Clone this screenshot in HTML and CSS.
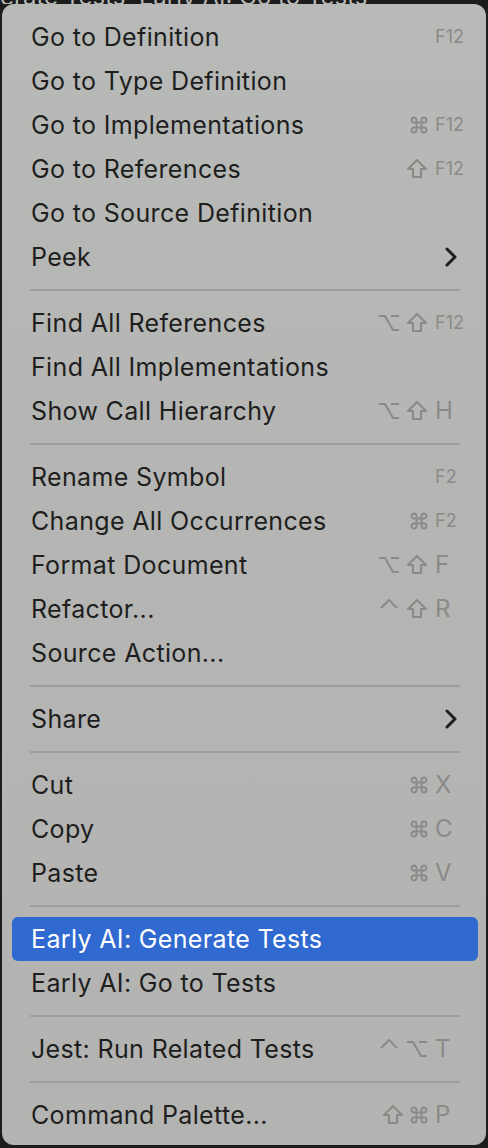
FILE: index.html
```html
<!DOCTYPE html>
<html>
<head>
<meta charset="utf-8">
<link rel="stylesheet" href="styles.css">
</head>
<body>
<div class="backdrop"><span>erate Tests&nbsp;&nbsp;Early AI: Go to Tests</span></div>
<div class="menu">
  <div class="item"><span class="label">Go to Definition</span><span class="sc"><span class="mods"></span><span class="key fk">F12</span></span></div>
  <div class="item"><span class="label">Go to Type Definition</span></div>
  <div class="item"><span class="label">Go to Implementations</span><span class="sc"><span class="mods"><svg class="g cmd" viewBox="0 0 24 24"><path d="M15 6v12a3 3 0 1 0 3-3H6a3 3 0 1 0 3 3V6a3 3 0 1 0-3 3h12a3 3 0 1 0-3-3z"/></svg></span><span class="key fk">F12</span></span></div>
  <div class="item"><span class="label">Go to References</span><span class="sc"><span class="mods"><svg class="g" viewBox="0 0 24 24"><path d="M12 3 21 12h-5v8H8v-8H3z"/></svg></span><span class="key fk">F12</span></span></div>
  <div class="item"><span class="label">Go to Source Definition</span></div>
  <div class="item"><span class="label">Peek</span><svg class="chev" viewBox="0 0 12 20"><path d="M2 2l8 8-8 8"/></svg></div>
  <div class="sep"></div>
  <div class="item"><span class="label">Find All References</span><span class="sc"><span class="mods"><svg class="g" viewBox="0 0 24 24"><path d="M2 5h6l8 14h6M14 5h8"/></svg><svg class="g" viewBox="0 0 24 24"><path d="M12 3 21 12h-5v8H8v-8H3z"/></svg></span><span class="key fk">F12</span></span></div>
  <div class="item"><span class="label">Find All Implementations</span></div>
  <div class="item"><span class="label">Show Call Hierarchy</span><span class="sc"><span class="mods"><svg class="g" viewBox="0 0 24 24"><path d="M2 5h6l8 14h6M14 5h8"/></svg><svg class="g" viewBox="0 0 24 24"><path d="M12 3 21 12h-5v8H8v-8H3z"/></svg></span><span class="key">H</span></span></div>
  <div class="sep"></div>
  <div class="item"><span class="label">Rename Symbol</span><span class="sc"><span class="mods"></span><span class="key fk">F2</span></span></div>
  <div class="item"><span class="label">Change All Occurrences</span><span class="sc"><span class="mods"><svg class="g cmd" viewBox="0 0 24 24"><path d="M15 6v12a3 3 0 1 0 3-3H6a3 3 0 1 0 3 3V6a3 3 0 1 0-3 3h12a3 3 0 1 0-3-3z"/></svg></span><span class="key fk">F2</span></span></div>
  <div class="item"><span class="label">Format Document</span><span class="sc"><span class="mods"><svg class="g" viewBox="0 0 24 24"><path d="M2 5h6l8 14h6M14 5h8"/></svg><svg class="g" viewBox="0 0 24 24"><path d="M12 3 21 12h-5v8H8v-8H3z"/></svg></span><span class="key">F</span></span></div>
  <div class="item"><span class="label">Refactor...</span><span class="sc"><span class="mods"><svg class="g" viewBox="0 0 24 24"><path d="M4 11l8-8 8 8"/></svg><svg class="g" viewBox="0 0 24 24"><path d="M12 3 21 12h-5v8H8v-8H3z"/></svg></span><span class="key">R</span></span></div>
  <div class="item"><span class="label">Source Action...</span></div>
  <div class="sep"></div>
  <div class="item"><span class="label">Share</span><svg class="chev" viewBox="0 0 12 20"><path d="M2 2l8 8-8 8"/></svg></div>
  <div class="sep"></div>
  <div class="item"><span class="label">Cut</span><span class="sc"><span class="mods"><svg class="g cmd" viewBox="0 0 24 24"><path d="M15 6v12a3 3 0 1 0 3-3H6a3 3 0 1 0 3 3V6a3 3 0 1 0-3 3h12a3 3 0 1 0-3-3z"/></svg></span><span class="key">X</span></span></div>
  <div class="item"><span class="label">Copy</span><span class="sc"><span class="mods"><svg class="g cmd" viewBox="0 0 24 24"><path d="M15 6v12a3 3 0 1 0 3-3H6a3 3 0 1 0 3 3V6a3 3 0 1 0-3 3h12a3 3 0 1 0-3-3z"/></svg></span><span class="key">C</span></span></div>
  <div class="item"><span class="label">Paste</span><span class="sc"><span class="mods"><svg class="g cmd" viewBox="0 0 24 24"><path d="M15 6v12a3 3 0 1 0 3-3H6a3 3 0 1 0 3 3V6a3 3 0 1 0-3 3h12a3 3 0 1 0-3-3z"/></svg></span><span class="key">V</span></span></div>
  <div class="sep"></div>
  <div class="item active"><span class="label">Early AI: Generate Tests</span></div>
  <div class="item"><span class="label">Early AI: Go to Tests</span></div>
  <div class="sep"></div>
  <div class="item"><span class="label">Jest: Run Related Tests</span><span class="sc"><span class="mods"><svg class="g" viewBox="0 0 24 24"><path d="M4 11l8-8 8 8"/></svg><svg class="g" viewBox="0 0 24 24"><path d="M2 5h6l8 14h6M14 5h8"/></svg></span><span class="key">T</span></span></div>
  <div class="sep"></div>
  <div class="item"><span class="label">Command Palette...</span><span class="sc"><span class="mods"><svg class="g" viewBox="0 0 24 24"><path d="M12 3 21 12h-5v8H8v-8H3z"/></svg><svg class="g cmd" viewBox="0 0 24 24"><path d="M15 6v12a3 3 0 1 0 3-3H6a3 3 0 1 0 3 3V6a3 3 0 1 0-3 3h12a3 3 0 1 0-3-3z"/></svg></span><span class="key">P</span></span></div>
</div>
</body>
</html>
```
FILE: styles.css
```css
html, body {
  margin: 0;
  padding: 0;
  background: #1c1c1c;
  height: 1148px;
  overflow: hidden;
}
body {
  font-family: "Inter", "Noto Sans", sans-serif;
}
.backdrop {
  height: 4px;
  overflow: hidden;
  position: relative;
}
.backdrop span {
  position: absolute;
  left: 0;
  top: -18px;
  font-size: 24px;
  color: #b8b8b8;
  white-space: nowrap;
}
.menu {
  margin-left: 2px;
  width: 484px;
  height: 1141px;
  box-sizing: border-box;
  padding: 11px 8px 8px 10px;
  border-radius: 12px;
  background: linear-gradient(180deg, #b8bab7 0%, #b5b6b3 40%, #b3b3b1 100%);
  display: flex;
  flex-direction: column;
}
.item {
  height: 44px;
  flex: none;
  display: flex;
  align-items: center;
  padding-left: 19px;
  border-radius: 6px;
  color: #1e1e1e;
  font-size: 25px;
  letter-spacing: 0.35px;
}
.item .label {
  flex: 1;
  white-space: nowrap;
}
.item.active {
  background: #3069cf;
  color: #ffffff;
}
.sc {
  display: flex;
  align-items: center;
  color: #8a8a88;
  letter-spacing: 0;
}
.mods {
  display: flex;
  align-items: center;
  gap: 4px;
  justify-content: flex-end;
}
.g {
  width: 24px;
  height: 24px;
  fill: none;
  stroke: #8a8a88;
  stroke-width: 2.1;
  stroke-linejoin: round;
}
.g.cmd {
  width: 20px;
  height: 20px;
  stroke-width: 2.3;
}
.key {
  width: 43px;
  margin-left: 6px;
  font-size: 24px;
  line-height: 1;
}
.key.fk {
  font-size: 18px;
}
.chev {
  width: 12px;
  height: 20px;
  margin-right: 21px;
  fill: none;
  stroke: #1e1e1e;
  stroke-width: 3;
  stroke-linecap: round;
  stroke-linejoin: round;
}
.sep {
  height: 22px;
  flex: none;
  display: flex;
  align-items: center;
  padding: 0 18px;
}
.sep::before {
  content: "";
  flex: 1;
  height: 2px;
  background: #9d9e9c;
}
```
